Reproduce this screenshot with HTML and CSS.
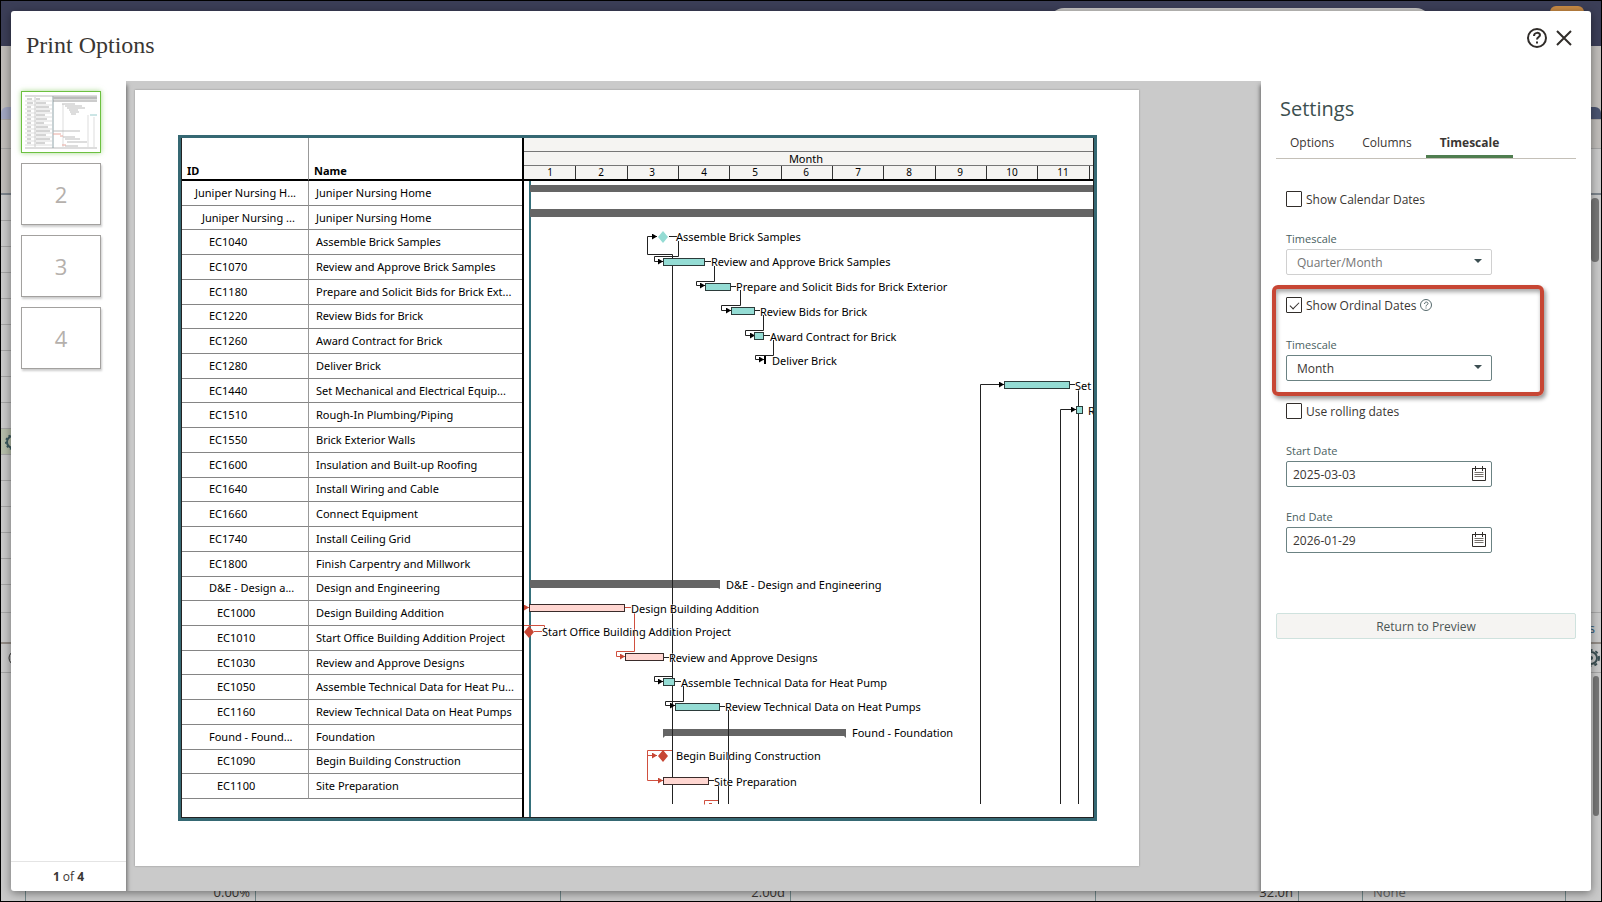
FILE: index.html
```html
<!DOCTYPE html>
<html lang="en">
<head>
    <meta charset="UTF-8">
    <meta name="viewport" content="width=device-width, initial-scale=1.0">
    <title>Print Options</title>
    <link rel="stylesheet" href="styles.css">
</head>
<body>
    <div class="app" aria-hidden="true">
        <div class="app-header">
            <span class="app-title">Juniper Nursing Home</span>
            <span class="app-search"></span>
            <span class="app-avatar"></span>
        </div>
        <div class="app-ribbon"></div>
        <div class="app-tabs"><span class="app-tab"></span><span class="app-tab dark"></span></div>
        <div class="app-toolbar"></div>
        <div class="app-columns"></div>
        <div class="app-rows">
            <div class="app-row"></div>
            <div class="app-row"></div>
            <div class="app-row"></div>
            <div class="app-row"></div>
            <div class="app-row"></div>
            <div class="app-row"></div>
            <div class="app-row"></div>
            <div class="app-row"></div>
            <div class="app-row"></div>
            <div class="app-row selected">
                <svg width="16" height="16" viewBox="0 0 16 16"><circle cx="8" cy="8" r="6" fill="none" stroke="#3c5a5e" stroke-width="2"/><circle cx="8" cy="8" r="7" fill="none" stroke="#3c5a5e" stroke-width="2" stroke-dasharray="2 2"/></svg>
            </div>
            <div class="app-row"></div>
            <div class="app-row"></div>
            <div class="app-row"></div>
            <div class="app-row"></div>
            <div class="app-row"></div>
        </div>
        <div class="app-gap"></div>
        <div class="app-detail-tabs">s</div>
        <div class="app-detail-head">
            <svg width="16" height="16" viewBox="0 0 16 16"><circle cx="8" cy="8" r="7" fill="none" stroke="#333"/></svg>
            <svg width="18" height="18" viewBox="0 0 18 18"><circle cx="9" cy="9" r="6" fill="none" stroke="#3c5054" stroke-width="2"/><circle cx="9" cy="9" r="8" fill="none" stroke="#3c5054" stroke-width="2" stroke-dasharray="3 3"/><circle cx="9" cy="9" r="2" fill="#3c5054"/></svg>
        </div>
        <div class="app-filler"></div>
        <div class="app-bottom">
            <span class="cell c-first"></span>
            <span class="cell c-pct">0.00%</span>
            <span class="cell c-wide"></span>
            <span class="cell c-dur">2.00d</span>
            <span class="cell c-wide"></span>
            <span class="cell c-hours">32.0h</span>
            <span class="cell c-gap"></span>
            <span class="cell c-none">None</span>
        </div>
        <span class="scrollbar top"></span>
        <span class="scrollbar bottom"></span>
    </div>

    <div class="dialog" role="dialog" aria-labelledby="dialog-title">
        <header class="dialog-header">
            <h1 id="dialog-title">Print Options</h1>
            <div class="dialog-actions">
                <button class="icon-button" type="button" aria-label="Help">
                    <svg width="22" height="22" viewBox="0 0 22 22" fill="none" stroke="#312d2a" stroke-width="2"><circle cx="11" cy="11" r="9"/><path d="M8 9c0-4 6-4 6-1 0 2-3 2-3 4.500"/><path d="M11 14.500v2"/></svg>
                </button>
                <button class="icon-button" type="button" aria-label="Close">
                    <svg width="22" height="22" viewBox="0 0 22 22" fill="none" stroke="#312d2a" stroke-width="2"><path d="M4 4l14 14M18 4L4 18"/></svg>
                </button>
            </div>
        </header>

        <div class="dialog-body">
            <aside class="pages">
                <div class="page-list">
                    <button class="page-thumb current" type="button" aria-label="Page 1">
                        <svg width="72" height="54" viewBox="0 0 72 54">
                            <path d="M0 1h72M0 53h72" stroke="#bbb"/>
                            <path d="M0 6h27M0 10h27M0 14h27M0 18h27M0 22h27M0 26h27M0 30h27M0 34h27M0 38h27M0 42h27M0 46h27M0 50h27" stroke="#ddd"/>
                            <path d="M2 4h5M11 4h4M2 8h6M11 8h10M2 12h4M11 12h13M2 16h4M11 16h14M2 20h4M11 20h9M2 24h4M11 24h11M2 28h4M11 28h8M2 32h4M11 32h12M2 36h4M11 36h14M2 40h4M11 40h10M2 44h4M11 44h14M2 48h4M11 48h9" stroke="#aaa"/>
                            <path d="M10 2v50" stroke="#ccc"/>
                            <path d="M28 1v52" stroke="#8fa3a8"/>
                            <path d="M28 3h44" stroke="#bbb" stroke-width="3"/>
                            <path d="M28 6h44" stroke="#999" stroke-width="1"/>
                            <path d="M38 9v43M63 20v32M69 22v30" stroke="#ddd"/>
                            <path d="M37 9h13M40 11h17M42 13h18M44 15h9M45 17h9M46 19h5M28 36h27M38 42h12M40 44h15M42 47h20M40 51h13" stroke="#bbb"/>
                            <path d="M65 20h7" stroke="#9cc"/>
                            <path d="M28 39h8M35 41h3M37 50h4" stroke="#e9aaa0"/>
                        </svg>
                    </button>
                    <button class="page-thumb" type="button">2</button>
                    <button class="page-thumb" type="button">3</button>
                    <button class="page-thumb" type="button">4</button>
                </div>
                <div class="page-count"><b>1</b> of <b>4</b></div>
            </aside>

            <main class="preview">
                <div class="sheet">
                    <div class="frame">
                        <div class="activities">
                            <table>
                                <thead>
                                    <tr><th class="col-id">ID</th><th>Name</th></tr>
                                </thead>
                                <tbody>
                                    <tr><td class="l0">Juniper Nursing H...</td><td>Juniper Nursing Home</td></tr>
                                    <tr><td class="l1">Juniper Nursing ...</td><td>Juniper Nursing Home</td></tr>
                                    <tr><td class="l2">EC1040</td><td>Assemble Brick Samples</td></tr>
                                    <tr><td class="l2">EC1070</td><td>Review and Approve Brick Samples</td></tr>
                                    <tr><td class="l2">EC1180</td><td>Prepare and Solicit Bids for Brick Ext...</td></tr>
                                    <tr><td class="l2">EC1220</td><td>Review Bids for Brick</td></tr>
                                    <tr><td class="l2">EC1260</td><td>Award Contract for Brick</td></tr>
                                    <tr><td class="l2">EC1280</td><td>Deliver Brick</td></tr>
                                    <tr><td class="l2">EC1440</td><td>Set Mechanical and Electrical Equip...</td></tr>
                                    <tr><td class="l2">EC1510</td><td>Rough-In Plumbing/Piping</td></tr>
                                    <tr><td class="l2">EC1550</td><td>Brick Exterior Walls</td></tr>
                                    <tr><td class="l2">EC1600</td><td>Insulation and Built-up Roofing</td></tr>
                                    <tr><td class="l2">EC1640</td><td>Install Wiring and Cable</td></tr>
                                    <tr><td class="l2">EC1660</td><td>Connect Equipment</td></tr>
                                    <tr><td class="l2">EC1740</td><td>Install Ceiling Grid</td></tr>
                                    <tr><td class="l2">EC1800</td><td>Finish Carpentry and Millwork</td></tr>
                                    <tr><td class="l2">D&amp;E - Design a...</td><td>Design and Engineering</td></tr>
                                    <tr><td class="l3">EC1000</td><td>Design Building Addition</td></tr>
                                    <tr><td class="l3">EC1010</td><td>Start Office Building Addition Project</td></tr>
                                    <tr><td class="l3">EC1030</td><td>Review and Approve Designs</td></tr>
                                    <tr><td class="l3">EC1050</td><td>Assemble Technical Data for Heat Pu...</td></tr>
                                    <tr><td class="l3">EC1160</td><td>Review Technical Data on Heat Pumps</td></tr>
                                    <tr><td class="l2">Found - Found...</td><td>Foundation</td></tr>
                                    <tr><td class="l3">EC1090</td><td>Begin Building Construction</td></tr>
                                    <tr><td class="l3">EC1100</td><td>Site Preparation</td></tr>
                                </tbody>
                            </table>
                        </div>

                        <svg class="gantt">
                            <defs>
                                <marker id="arrow" markerUnits="userSpaceOnUse" markerWidth="5" markerHeight="6" refX="5" refY="3"><path d="M0 0l5 3-5 3z" fill="#000"/></marker>
                                <marker id="arrow-red" markerUnits="userSpaceOnUse" markerWidth="5" markerHeight="6" refX="5" refY="3"><path d="M0 0l5 3-5 3z" fill="#c74634"/></marker>
                            </defs>

                            <!-- timescale -->
                            <rect class="scale" width="100%" height="42"/>
                            <path class="scale-line" d="M0 13.500h1000M0 27.500h1000"/>
                            <path class="scale-tick" d="M51.500 28v13M103.500 28v13M154.500 28v13M205.500 28v13M257.500 28v13M308.500 28v13M359.500 28v13M411.500 28v13M462.500 28v13M513.500 28v13M565.500 28v13"/>
                            <rect y="41" width="100%" height="2"/>
                            <g class="scale-text">
                                <text x="282" y="25">Month</text>
                                <text x="26" y="38">1</text>
                                <text x="77" y="38">2</text>
                                <text x="128" y="38">3</text>
                                <text x="180" y="38">4</text>
                                <text x="231" y="38">5</text>
                                <text x="282" y="38">6</text>
                                <text x="334" y="38">7</text>
                                <text x="385" y="38">8</text>
                                <text x="436" y="38">9</text>
                                <text x="488" y="38">10</text>
                                <text x="539" y="38">11</text>
                            </g>

                            <rect x="5" y="43" width="2" height="100%" fill="#35707b"/>

                            <!-- summary bars -->
                            <g class="summary">
                                <rect x="6" y="47" width="100%" height="7"/>
                                <rect x="6" y="71" width="100%" height="8"/>
                                <path d="M6 442h190v9l-2-1H6z"/>
                                <path d="M139 591h183v9l-2-2H141l-2 2z"/>
                            </g>

                            <!-- relationships -->
                            <g class="link">
                                <path d="M148.500 666V116.500H123.500V98.500H133" marker-end="url(#arrow)"/>
                                <path d="M145 98.500h8M154.500 103v15.500H130.500v5H139" marker-end="url(#arrow)"/>
                                <path d="M181 123.500h6M190.500 128v15.500H172.500v4H181" marker-end="url(#arrow)"/>
                                <path d="M207 148.500h5M216.500 152v15.500H197.500v5H207" marker-end="url(#arrow)"/>
                                <path d="M231 172.500h5M239.500 177v15.500H221.500v5H231" marker-end="url(#arrow)"/>
                                <path d="M240 197.500h6M249.500 202v15.500H231.500v4H240" marker-end="url(#arrow)"/>
                                <path d="M456.500 666V246.500H480" marker-end="url(#arrow)"/>
                                <path d="M545 246.500h6M554.500 252V666"/>
                                <path d="M536.500 666V271.500H552" marker-end="url(#arrow)"/>
                                <path d="M139 519.500h6M148.500 538.500H130.500v5H139" marker-end="url(#arrow)"/>
                                <path d="M151 543.500h6M159.500 548v15.500H141.500v4H151" marker-end="url(#arrow)"/>
                                <path d="M196 568.500h5M204.500 572v94"/>
                                <path d="M185 642.500h5M194.500 648v18"/>
                            </g>
                            <g class="link critical">
                                <path d="M0 469.500h5" marker-end="url(#arrow-red)"/>
                                <path d="M101 469.500h6M110.500 474v39.500H92.500v5H101" marker-end="url(#arrow-red)"/>
                                <path d="M0 487.500h20.500v2M10 493.500h8"/>
                                <path d="M148 612.500H123.500v30H139" marker-end="url(#arrow-red)"/>
                                <path d="M123 617.500h10" marker-end="url(#arrow-red)"/>
                                <path d="M194 662.500H180.500v4M185 665.500h3"/>
                            </g>

                            <!-- activity bars -->
                            <g class="bar">
                                <rect x="139.500" y="120.500" width="41" height="7"/>
                                <rect x="181.500" y="145.500" width="25" height="7"/>
                                <rect x="207.500" y="169.500" width="23" height="7"/>
                                <rect x="230.500" y="194.500" width="9" height="7"/>
                                <rect x="480.500" y="243.500" width="65" height="7"/>
                                <rect x="552.500" y="268.500" width="6" height="7"/>
                                <rect x="139.500" y="540.500" width="11" height="7"/>
                                <rect x="151.500" y="565.500" width="44" height="7"/>
                            </g>
                            <g class="bar critical">
                                <rect x="5.500" y="466.500" width="95" height="7"/>
                                <rect x="101.500" y="515.500" width="38" height="7"/>
                                <rect x="139.500" y="639.500" width="45" height="7"/>
                            </g>
                            <rect x="240" y="218" width="2" height="8"/>
                            <path class="milestone" d="M139 93l5 6-5 6-5-6z"/>
                            <path class="milestone critical" d="M5 488l5 6-5 6-5-6zM139 612l5 6-5 6-5-6z"/>

                            <g class="label">
                                <text x="152" y="103">Assemble Brick Samples</text>
                                <text x="187" y="128">Review and Approve Brick Samples</text>
                                <text x="212" y="153">Prepare and Solicit Bids for Brick Exterior</text>
                                <text x="236" y="178">Review Bids for Brick</text>
                                <text x="246" y="203">Award Contract for Brick</text>
                                <text x="248" y="227">Deliver Brick</text>
                                <text x="551" y="252">Set</text>
                                <text x="564" y="277">R</text>
                                <text x="202" y="451">D&amp;E - Design and Engineering</text>
                                <text x="107" y="475">Design Building Addition</text>
                                <text x="18" y="498">Start Office Building Addition Project</text>
                                <text x="145" y="524">Review and Approve Designs</text>
                                <text x="157" y="549">Assemble Technical Data for Heat Pump</text>
                                <text x="201" y="573">Review Technical Data on Heat Pumps</text>
                                <text x="328" y="599">Found - Foundation</text>
                                <text x="152" y="622">Begin Building Construction</text>
                                <text x="190" y="648">Site Preparation</text>
                            </g>
                        </svg>
                    </div>
                </div>
            </main>

            <section class="settings">
                <h2>Settings</h2>
                <div class="tabs" role="tablist">
                    <button class="tab" type="button" role="tab">Options</button>
                    <button class="tab" type="button" role="tab">Columns</button>
                    <button class="tab active" type="button" role="tab" aria-selected="true">Timescale</button>
                </div>

                <form class="settings-form">
                    <div class="group">
                        <label class="check"><input type="checkbox"> Show Calendar Dates</label>
                        <div class="field">
                            <label for="calendar-scale">Timescale</label>
                            <div class="select">
                                <select id="calendar-scale" disabled><option>Quarter/Month</option></select>
                                <svg width="8" height="4" viewBox="0 0 8 4"><path d="M0 0h8L4 4z" fill="#3c4f52"/></svg>
                            </div>
                        </div>
                    </div>

                    <div class="group highlight">
                        <div class="check-row">
                            <label class="check"><input type="checkbox" checked> Show Ordinal Dates</label>
                            <svg width="12" height="12" viewBox="0 0 12 12" fill="none" stroke="#55696c"><circle cx="6" cy="6" r="5.500"/><path d="M4.500 5c0-2.500 3.500-2.500 3.500-.5C8 6 6 5.500 6 7.500M6 8.500v1"/></svg>
                        </div>
                        <div class="field">
                            <label for="ordinal-scale">Timescale</label>
                            <div class="select">
                                <select id="ordinal-scale"><option>Month</option></select>
                                <svg width="8" height="4" viewBox="0 0 8 4"><path d="M0 0h8L4 4z" fill="#3c4f52"/></svg>
                            </div>
                        </div>
                    </div>

                    <div class="group">
                        <label class="check"><input type="checkbox"> Use rolling dates</label>
                        <div class="field">
                            <label for="start-date">Start Date</label>
                            <div class="date">
                                <input id="start-date" type="text" value="2025-03-03">
                                <button type="button" aria-label="Pick start date">
                                    <svg width="16" height="16" viewBox="0 0 16 16" fill="none" stroke="#312d2a"><path d="M1.500 2.500v12h13v-12z"/><path d="M1 2.500h14M4.500 0v5M11.500 0v5"/><path d="M3.500 6.500h9M3.500 8.500h9M3.500 10.500h9" stroke="#77716c"/></svg>
                                </button>
                            </div>
                        </div>
                    </div>

                    <div class="group">
                        <div class="field">
                            <label for="end-date">End Date</label>
                            <div class="date">
                                <input id="end-date" type="text" value="2026-01-29">
                                <button type="button" aria-label="Pick end date">
                                    <svg width="16" height="16" viewBox="0 0 16 16" fill="none" stroke="#312d2a"><path d="M1.500 2.500v12h13v-12z"/><path d="M1 2.500h14M4.500 0v5M11.500 0v5"/><path d="M3.500 6.500h9M3.500 8.500h9M3.500 10.500h9" stroke="#77716c"/></svg>
                                </button>
                            </div>
                        </div>
                    </div>
                </form>

                <button class="return-button" type="button">Return to Preview</button>
            </section>
        </div>
    </div>
</body>
</html>
```
FILE: styles.css
```css
* {
    box-sizing: border-box;
}
body {
    margin: 0;
    height: 100vh;
    overflow: hidden;
    background: #000;
    color: #3a3633;
    font-family: "Open Sans", "Noto Sans", sans-serif;
    font-size: 12px;
}
button, input, select {
    font: inherit;
    color: inherit;
}
button {
    padding: 0;
    border: none;
    background: none;
    cursor: pointer;
}
svg {
    display: block;
}

/* application behind the dialog */
.app {
    position: absolute;
    inset: 1px;
    display: flex;
    flex-direction: column;
    overflow: hidden;
    background: #c9c9c9;
    font-size: 13px;
}
.app > div {
    flex: none;
}
.app-header {
    display: flex;
    height: 45px;
    padding: 5px 17px 0 285px;
    background: #3b3e57;
}
.app-title {
    color: #fff;
    font-size: 15px;
    line-height: 18px;
}
.app-search {
    width: 380px;
    height: 28px;
    margin: 2px 120px 0 auto;
    border-radius: 14px;
    background: #c9c8c6;
}
.app-avatar {
    width: 34px;
    height: 34px;
    border-radius: 6px;
    background: #c98b45;
}
.app-ribbon {
    height: 61px;
    background: #bfbcb9;
}
.app-tabs {
    display: flex;
    justify-content: space-between;
    height: 13px;
    border-bottom: 1px solid #aaa7a4;
    background: #bfbcb9;
}
.app-tab {
    width: 100px;
    border-radius: 6px 6px 0 0;
    background: #a0a5c1;
}
.app-tab.dark {
    background: #4a5470;
}
.app-toolbar {
    height: 29px;
    border-bottom: 1px solid #a5a5a5;
    background: #bfbcb9;
}
.app-columns {
    height: 46px;
    border-bottom: 2px solid #7c848c;
    background: linear-gradient(90deg, #bfbcb9 50%, #c9c9c9 50%);
}
.app-row {
    width: 50%;
    height: 26px;
    border-bottom: 1px solid #a5a5a5;
}
.app-row.selected {
    padding: 5px 4px;
    background: #b5bda9;
}
.app-gap {
    height: 28px;
    border-bottom: 1px solid #a9a9a9;
}
.app-detail-tabs {
    height: 31px;
    padding-right: 6px;
    border-bottom: 2px solid #938c86;
    color: #2a5575;
    line-height: 30px;
    text-align: right;
}
.app-detail-head {
    display: flex;
    align-items: center;
    justify-content: space-between;
    height: 29px;
    padding: 0 1px 0 7px;
    border-bottom: 1px solid #a5a5a5;
}
.app .app-filler {
    flex: 1;
}
.app-bottom {
    display: flex;
    height: 22px;
    line-height: 26px;
    text-align: right;
}
.cell {
    flex: none;
    padding: 0 5px;
    border-right: 1px solid #71878a;
}
.c-first {
    width: 25px;
}
.c-pct, .c-dur {
    width: 230px;
}
.c-wide {
    width: 305px;
}
.c-hours {
    width: 203px;
}
.c-gap {
    width: 64px;
}
.c-none {
    width: 203px;
    padding: 0 10px;
    color: #666;
    text-align: left;
}
.scrollbar {
    position: absolute;
    right: 2px;
    width: 8px;
    border-radius: 4px;
    background: #777;
}
.scrollbar.top {
    top: 197px;
    height: 64px;
}
.scrollbar.bottom {
    top: 675px;
    height: 140px;
    width: 6px;
}

/* dialog */
.dialog {
    position: absolute;
    inset: 11px;
    display: flex;
    flex-direction: column;
    overflow: hidden;
    border-radius: 3px;
    background: #fff;
    box-shadow: 0 2px 10px rgba(0, 0, 0, 0.45);
}
.dialog-header {
    display: flex;
    justify-content: space-between;
    flex: none;
    height: 70px;
    padding: 16px 16px 0 15px;
}
.dialog-header h1 {
    margin: 3px 0 0;
    font-family: "Liberation Serif", serif;
    font-size: 24px;
    font-weight: normal;
    line-height: 30px;
}
.dialog-actions {
    display: flex;
    align-items: flex-start;
    gap: 5px;
}
.dialog-body {
    display: flex;
    flex: 1;
    min-height: 0;
    overflow: hidden;
}

/* page thumbnails */
.pages {
    position: relative;
    display: flex;
    flex-direction: column;
    justify-content: space-between;
    width: 115px;
    flex: none;
    box-shadow: 1px 4px 4px rgba(0, 0, 0, 0.5);
}
.page-list {
    display: flex;
    flex-direction: column;
    gap: 10px;
    padding: 10px;
}
.page-thumb {
    width: 80px;
    height: 62px;
    border: 1px solid #a3a19f;
    background: #fff;
    box-shadow: 1px 2px 2px rgba(0, 0, 0, 0.2);
    color: #b5b0ac;
    font-size: 22px;
}
.page-thumb.current {
    padding: 3px;
    border-color: #6cc040;
    box-shadow: 0 0 5px rgba(108, 192, 64, 0.6);
}
.page-count {
    height: 30px;
    border-top: 1px solid #e4e4e4;
    line-height: 29px;
    text-align: center;
}

/* printed sheet */
.preview {
    flex: 1;
    min-width: 0;
    padding: 9px 9px 25px;
    overflow: hidden;
    background: #cacaca;
}
.sheet {
    display: flex;
    height: 100%;
    aspect-ratio: 22 / 17;
    padding: 45px 42px 45px 43px;
    background: #fff;
    box-shadow: 0 0 2px rgba(0, 0, 0, 0.3);
}
.frame {
    display: flex;
    flex: 1;
    min-width: 0;
    border: 3px solid #356873;
    box-shadow: inset 1px 0 #222, inset -1px -1px #222;
    padding: 0 1px 1px;
    color: #000;
    font-family: "Noto Sans", "Open Sans", sans-serif;
}
.activities {
    flex: none;
    width: 342px;
    padding-bottom: 18px;
    border-right: 2px solid #000;
}
.activities table {
    width: 100%;
    height: 100%;
    border-collapse: separate;
    border-spacing: 0;
    table-layout: fixed;
    font-size: 11px;
    line-height: 16px;
}
.activities th {
    height: 43px;
    padding: 0 5px;
    border-bottom: 2px solid #000;
    text-align: left;
    vertical-align: bottom;
}
.activities td {
    padding: 0 0 0 7px;
    border-bottom: 1px solid #858585;
    white-space: nowrap;
}
.activities th:first-child,
.activities td:first-child {
    border-right: 1px solid #999;
}
.activities .col-id {
    width: 127px;
}
.activities .l0 {
    padding-left: 13px;
}
.activities .l1 {
    padding-left: 20px;
}
.activities .l2 {
    padding-left: 27px;
}
.activities .l3 {
    padding-left: 35px;
}

/* gantt chart */
.gantt {
    flex: 1;
    min-width: 0;
    height: 100%;
    overflow: hidden;
    font-size: 11px;
}
.scale {
    fill: #f5f4f2;
}
.scale-line {
    stroke: #777;
}
.scale-tick {
    stroke: #333;
}
.scale-text {
    font-size: 10px;
    text-anchor: middle;
}
.scale-text text:first-child {
    font-size: 11px;
}
.summary {
    fill: #656565;
}
.link {
    fill: none;
    stroke: #222;
}
.link.critical {
    stroke: #d0503f;
}
.bar {
    fill: #94dcd4;
    stroke: #2b3b3a;
}
.bar.critical {
    fill: #ffd6d1;
    stroke: #3a2b2a;
}
.milestone {
    fill: #94dcd4;
}
.milestone.critical {
    fill: #c74634;
}
.label {
    paint-order: stroke;
    stroke: rgba(255, 255, 255, 0.7);
    stroke-width: 1px;
}

/* settings panel */
.settings {
    position: relative;
    flex: none;
    width: 330px;
    padding: 14px 15px;
    box-shadow: -1px 4px 4px rgba(0, 0, 0, 0.5);
    background: #fff;
}
.settings h2 {
    margin: 0 4px 4px;
    color: #3c4f4f;
    font-size: 20px;
    font-weight: normal;
    line-height: 28px;
}
.tabs {
    display: flex;
    border-bottom: 1px solid #c4c0b8;
}
.tab {
    height: 31px;
    padding: 3px 14px 0;
    border-bottom: 3px solid transparent;
}
.tab.active {
    border-color: #4f7d4f;
    font-weight: bold;
}
.settings-form {
    display: flex;
    flex-direction: column;
    gap: 22px;
    width: 216px;
    padding: 32px 0 0 10px;
}
.group {
    position: relative;
    display: flex;
    flex-direction: column;
    gap: 24px;
}
.highlight::after {
    content: "";
    position: absolute;
    inset: -12px -52px -15px -14px;
    border: 4px solid #c74634;
    border-radius: 6px;
    box-shadow: 2px 3px 4px rgba(0, 0, 0, 0.4), inset 1px 3px 4px rgba(0, 0, 0, 0.35);
    pointer-events: none;
}
.check {
    display: flex;
    align-items: center;
    gap: 4px;
    height: 16px;
}
.check input {
    appearance: none;
    width: 16px;
    height: 16px;
    margin: 0;
    border: 1px solid #312d2a;
    border-radius: 1px;
    background: #fff;
}
.check input:checked::after {
    content: "";
    display: block;
    width: 8px;
    height: 4px;
    margin: 4px 3px;
    border: solid #312d2a;
    border-width: 0 0 1px 1px;
    transform: rotate(-45deg);
}
.check-row {
    display: flex;
    align-items: center;
    gap: 4px;
}
.field {
    display: flex;
    flex-direction: column;
    gap: 2px;
}
.field label {
    color: #4b5f62;
    font-size: 11px;
    line-height: 16px;
}
.select, .date {
    position: relative;
    display: flex;
    height: 26px;
}
.select select {
    appearance: none;
    width: 100%;
    padding: 0 10px;
    border: 1px solid #6b8283;
    border-radius: 2px;
    background: #fff;
    opacity: 1;
}
.select select:disabled {
    border-color: #d0d0d0;
    color: #757575;
}
.select svg {
    position: absolute;
    top: 10px;
    right: 10px;
    pointer-events: none;
}
.date {
    align-items: center;
    padding-right: 4px;
    border: 1px solid #6b8283;
    border-radius: 2px;
}
.date input {
    flex: 1;
    min-width: 0;
    padding: 0 6px;
    border: none;
    outline: none;
    background: none;
}
.return-button {
    width: 100%;
    height: 26px;
    margin-top: 60px;
    border: 1px solid #cfe2de;
    border-radius: 2px;
    background: #f5f4f2;
    color: #4b5555;
}
```
